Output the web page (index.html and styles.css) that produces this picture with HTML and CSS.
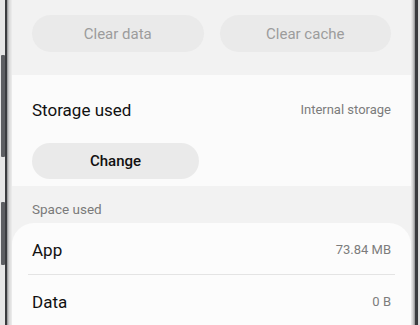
FILE: index.html
```html
<!DOCTYPE html>
<html>
<head>
  <title>Storage</title>
  <link rel="stylesheet" href="styles.css">
</head>
<body>
  <div class="phone">
    <div class="bezel-left">
      <div class="side-key key-volume"></div>
      <div class="side-key key-bixby"></div>
    </div>
    <div class="screen">
      <div class="actions">
        <div class="pill disabled">Clear data</div>
        <div class="pill disabled">Clear cache</div>
      </div>
      <div class="storage">
        <div class="row">
          <span class="title">Storage used</span>
          <span class="value">Internal storage</span>
        </div>
        <div class="pill change">Change</div>
      </div>
      <div class="label">Space used</div>
      <div class="card">
        <div class="row item">
          <span class="title">App</span>
          <span class="value">73.84 MB</span>
        </div>
        <div class="divider"></div>
        <div class="row item">
          <span class="title">Data</span>
          <span class="value">0 B</span>
        </div>
      </div>
    </div>
    <div class="bezel-right"></div>
  </div>
</body>
</html>
```

FILE: styles.css
```css
body { margin: 0; font-family: Roboto, "Noto Sans", sans-serif; background: #e9e9e9; }
.phone { display: flex; width: 420px; height: 325px; overflow: hidden; }

.bezel-left { position: relative; width: 12px; flex: none; background: linear-gradient(to right, #e6e6e6 0, #e6e6e6 5px, #3a3b3e 5px, #3a3b3e 7px, #8e8f91 7px, #d6d6d6 9px, #eeeeee 12px); }
.side-key { position: absolute; left: 1px; width: 4px; background: #5d5e62; border-radius: 1px; }
.key-volume { top: 55px; height: 102px; }
.key-bixby { top: 202px; height: 63px; }

.bezel-right { width: 9px; flex: none; background: linear-gradient(to right, #eeeeee 0, #cfcfcf 2px, #8e8f91 4px, #3a3b3e 4px, #3a3b3e 7px, #d8d8d8 7px, #e2e2e2 9px); }

.screen { flex: 1; background: #f2f2f2; display: flex; flex-direction: column; }

.actions { display: grid; grid-template-columns: 1fr 1fr; gap: 16px; padding: 15px 20px 23px; }
.pill { height: 37px; border-radius: 19px; background: #eaeaea; display: flex; align-items: center; justify-content: center; font-size: 15px; }
.pill.disabled { color: #9c9c9c; }

.storage { background: #fbfbfb; padding: 24px 20px 7px; }
.row { display: flex; justify-content: space-between; align-items: center; line-height: 22px; }
.title { font-size: 17px; color: #111; }
.value { font-size: 13px; color: #7c7c7c; }
.pill.change { width: 167px; height: 36px; margin-top: 22px; color: #111; font-weight: 500; }

.label { padding: 14px 20px 5px; font-size: 13.5px; line-height: 18px; color: #7a7a7a; }

.card { flex: 1; background: #fcfcfc; border-radius: 22px 22px 0 0; }
.item { padding: 16px 20px 13px; }
.divider { height: 1px; background: #e4e4e4; margin: 0 16px; }
```
